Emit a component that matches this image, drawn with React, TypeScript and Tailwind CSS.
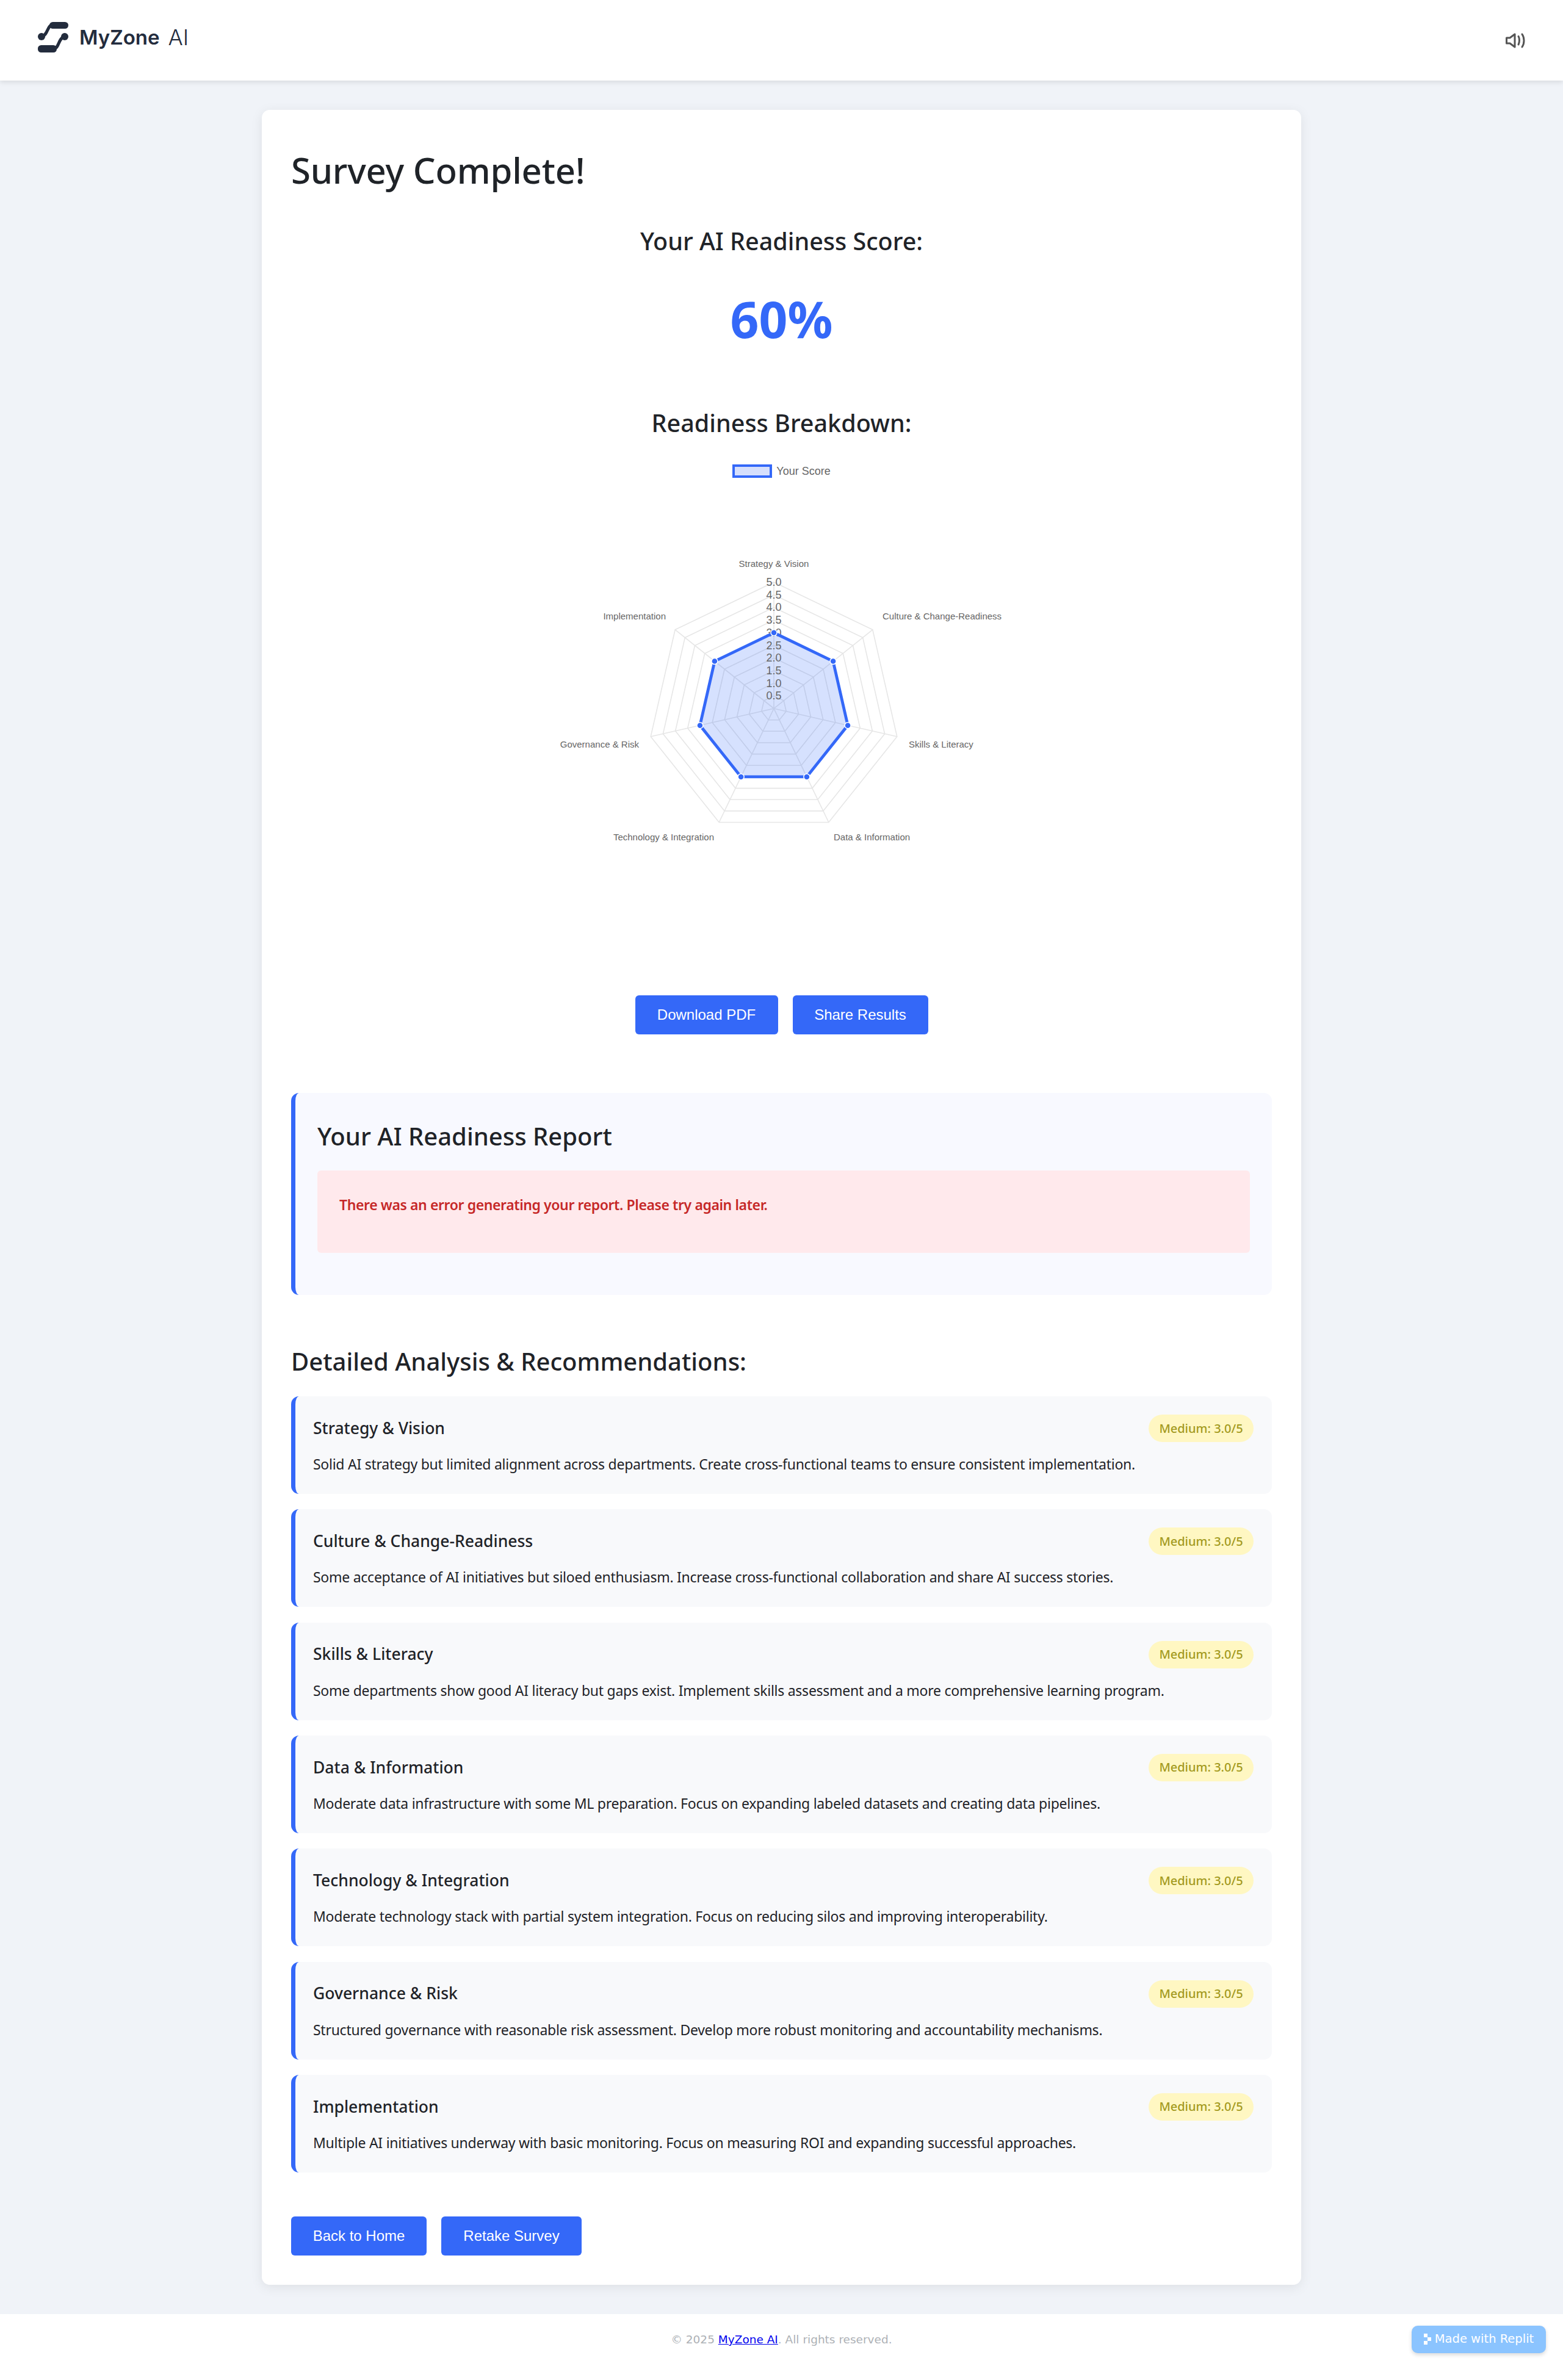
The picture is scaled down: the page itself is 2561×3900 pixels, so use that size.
const axes = [
  { label: 'Strategy & Vision', x: 1267, y: 923, anchor: 'middle' },
  { label: 'Culture & Change-Readiness', x: 1445, y: 1009, anchor: 'start' },
  { label: 'Skills & Literacy', x: 1488, y: 1219, anchor: 'start' },
  { label: 'Data & Information', x: 1365, y: 1371, anchor: 'start' },
  { label: 'Technology & Integration', x: 1169, y: 1371, anchor: 'end' },
  { label: 'Governance & Risk', x: 1046, y: 1219, anchor: 'end' },
  { label: 'Implementation', x: 1090, y: 1009, anchor: 'end' },
];

const ticks = ['5.0', '4.5', '4.0', '3.5', '3.0', '2.5', '2.0', '1.5', '1.0', '0.5'];

const results = [
  {
    name: 'Strategy & Vision',
    text: 'Solid AI strategy but limited alignment across departments. Create cross-functional teams to ensure consistent implementation.',
  },
  {
    name: 'Culture & Change-Readiness',
    text: 'Some acceptance of AI initiatives but siloed enthusiasm. Increase cross-functional collaboration and share AI success stories.',
  },
  {
    name: 'Skills & Literacy',
    text: 'Some departments show good AI literacy but gaps exist. Implement skills assessment and a more comprehensive learning program.',
  },
  {
    name: 'Data & Information',
    text: 'Moderate data infrastructure with some ML preparation. Focus on expanding labeled datasets and creating data pipelines.',
  },
  {
    name: 'Technology & Integration',
    text: 'Moderate technology stack with partial system integration. Focus on reducing silos and improving interoperability.',
  },
  {
    name: 'Governance & Risk',
    text: 'Structured governance with reasonable risk assessment. Develop more robust monitoring and accountability mechanisms.',
  },
  {
    name: 'Implementation',
    text: 'Multiple AI initiatives underway with basic monitoring. Focus on measuring ROI and expanding successful approaches.',
  },
];

const CX = 1267;
const CY = 1160;
const R = 207;

function point(i: number, value: number) {
  const angle = (i * 2 * Math.PI) / 7;
  const r = (value / 5) * R;
  return [CX + r * Math.sin(angle), CY - r * Math.cos(angle)];
}

function ring(value: number) {
  return axes.map((_, i) => point(i, value).map((n) => n.toFixed(1)).join(',')).join(' ');
}

function RadarChart() {
  return (
    <svg viewBox="867 880 826 560" className="mx-auto mt-[98px] block h-[560px] w-[826px]">
      {[0.5, 1, 1.5, 2, 2.5, 3, 3.5, 4, 4.5, 5].map((v) => (
        <polygon key={v} points={ring(v)} fill="none" stroke="#e6e6e6" strokeWidth="1.6" />
      ))}
      {axes.map((a, i) => {
        const [x, y] = point(i, 5);
        return <line key={a.label} x1={CX} y1={CY} x2={x} y2={y} stroke="#e6e6e6" strokeWidth="1.6" />;
      })}
      <polygon points={ring(3)} fill="#3468f8" fillOpacity="0.2" />
      {ticks.map((t, i) => (
        <text
          key={t}
          x={CX}
          y={CY - (5 - i * 0.5) * 41.4 + 6}
          textAnchor="middle"
          fontSize="18"
          fill="#666666"
          fontFamily="'Liberation Sans', Arial, sans-serif"
        >
          {t}
        </text>
      ))}
      <polygon points={ring(3)} fill="none" stroke="#3468f8" strokeWidth="4.8" />
      {axes.map((a, i) => {
        const [x, y] = point(i, 3);
        return <circle key={a.label} cx={x} cy={y} r="5" fill="#3468f8" stroke="#ffffff" strokeWidth="1.5" />;
      })}
      {axes.map((a) => (
        <text
          key={a.label}
          x={a.x}
          y={a.y + 5}
          textAnchor={a.anchor as 'start' | 'middle' | 'end'}
          fontSize="15"
          fill="#666666"
          fontFamily="'Liberation Sans', Arial, sans-serif"
        >
          {a.label}
        </text>
      ))}
    </svg>
  );
}

function LogoMark() {
  return (
    <svg viewBox="0 0 50 50" className="h-[50px] w-[50px]" fill="#232c3d">
      <rect x="19" y="0" width="31" height="11" rx="5.5" />
      <rect x="0" y="38" width="31" height="12" rx="5.5" />
      <circle cx="6" cy="24" r="6" />
      <circle cx="44" cy="24" r="6" />
      <path d="M24 5C15 5 17 22 6 24M26 44C35 44 33 26 44 24" fill="none" stroke="#232c3d" strokeWidth="5" />
    </svg>
  );
}

function SoundIcon() {
  return (
    <svg viewBox="0 0 33 25" className="h-[25px] w-[33px]" fill="none" stroke="#555555" strokeWidth="3" strokeLinejoin="round" strokeLinecap="round">
      <path d="M1.5 8H7L15 2V23L7 17H1.5Z" />
      <path d="M21 5.5C23 9 23 15 21 19" />
      <path d="M27 2C31 8 31 17 27 23" />
    </svg>
  );
}

function Button({ children, className }: { children: string; className: string }) {
  return (
    <button className={`h-[64px] rounded-[6px] bg-[#3468f8] font-['Liberation_Sans',Arial,sans-serif] text-[24px] text-white ${className}`}>
      {children}
    </button>
  );
}

export default function App() {
  return (
    <div className="min-h-screen bg-[#f0f3f8] font-['Noto_Sans',sans-serif] text-[#1f2328]">
      {/* Header */}
      <header className="flex h-[132px] items-start justify-between bg-white pt-[36px] pl-[62px] pr-[61px] shadow-[0_3px_8px_rgba(0,0,0,0.1)]">
        <div className="flex items-center">
          <LogoMark />
          <span className="ml-[18px] font-['Inter',sans-serif] text-[33px] font-semibold leading-[50px] text-[#232c3d]">
            MyZone
          </span>
          <span className="ml-[14px] font-['Inter',sans-serif] text-[36px] font-light leading-[50px] text-[#232c3d]">
            AI
          </span>
        </div>
        <div className="pt-[18px]">
          <SoundIcon />
        </div>
      </header>

      <main className="px-[429px] pt-[48px] pb-[48px]">
        <div className="rounded-[13px] bg-white p-[48px] shadow-[0_4px_20px_rgba(0,0,0,0.08)]">
          <h1 className="mt-[11px] text-[58px] font-medium leading-[80px] tracking-[-0.2px]">Survey Complete!</h1>
          <h2 className="mt-[48px] text-center text-[39.5px] font-medium leading-[56px]">Your AI Readiness Score:</h2>
          <div className="mt-[44px] text-center text-[82px] font-bold leading-[110px] text-[#3468f8]">60%</div>
          <h2 className="mt-[88px] text-center text-[39.5px] font-medium leading-[56px]">Readiness Breakdown:</h2>

          <div className="mt-[40px] flex h-[22px] items-center justify-center">
            <span className="h-[22px] w-[65px] border-[4px] border-[#3468f8] bg-[#d6dffc]" />
            <span className="ml-[7px] font-['Liberation_Sans',Arial,sans-serif] text-[18px] text-[#666666]">Your Score</span>
          </div>

          <RadarChart />

          <div className="mt-[190px] flex justify-center gap-[24px]">
            <Button className="w-[234px]">Download PDF</Button>
            <Button className="w-[222px]">Share Results</Button>
          </div>

          {/* Report */}
          <section className="mt-[96px] rounded-[13px] border-l-[7px] border-[#3468f8] bg-[#f8f9ff] pt-[42px] pr-[36px] pb-[69px] pl-[36px]">
            <h2 className="text-[40px] font-medium leading-[58px]">Your AI Readiness Report</h2>
            <div className="mt-[27px] h-[135px] rounded-[6px] bg-[#ffe9ec] pt-[34px] pl-[36px]">
              <p className="text-[23px] font-semibold leading-[44px] tracking-[-0.4px] text-[#c62828]">
                There was an error generating your report. Please try again later.
              </p>
            </div>
          </section>

          <h2 className="mt-[81px] text-[40px] font-medium leading-[56px]">Detailed Analysis &amp; Recommendations:</h2>

          <div className="mt-[29px] flex flex-col gap-[25.33px]">
            {results.map((r) => (
              <div key={r.name} className="h-[160px] rounded-[13px] border-l-[7px] border-[#3468f8] bg-[#f8f9fb] pt-[30px] pr-[30px] pl-[29px]">
                <div className="flex h-[45px] items-center justify-between">
                  <h3 className="text-[26.5px] font-medium">{r.name}</h3>
                  <span className="flex h-[45px] w-[172px] items-center justify-center rounded-full bg-[#fff7c2] text-[20px] font-medium text-[#a39a20]">
                    Medium: 3.0/5
                  </span>
                </div>
                <p className="mt-[16px] text-[23px] leading-[40px] tracking-[-0.26px]">{r.text}</p>
              </div>
            ))}
          </div>

          <div className="mt-[72px] flex gap-[24px]">
            <Button className="w-[222px]">Back to Home</Button>
            <Button className="w-[230px]">Retake Survey</Button>
          </div>
        </div>
      </main>

      {/* Footer */}
      <footer className="relative flex h-[109px] items-start justify-center bg-white pt-[28px] text-[18.5px] leading-[28px] text-[#adb1b6]">
        <p className="font-['DejaVu_Sans',sans-serif]">
          © 2025 <a href="#" className="text-[#0000ee] underline">MyZone AI</a>. All rights reserved.
        </p>
        <div className="absolute top-[19px] right-[28px] flex h-[45px] w-[220px] items-center justify-center gap-[6px] rounded-[10px] bg-[#8bc4ff] font-['DejaVu_Sans',sans-serif] text-[19.5px] text-white shadow-[0_3px_6px_rgba(0,0,0,0.15)]">
          <svg viewBox="0 0 16 24" className="h-[18px] w-[12px]" fill="#ffffff">
            <path d="M0 0H8V8H0ZM8 8H16V16H8ZM0 16H8V24H0Z" />
          </svg>
          Made with Replit
        </div>
      </footer>
    </div>
  );
}
